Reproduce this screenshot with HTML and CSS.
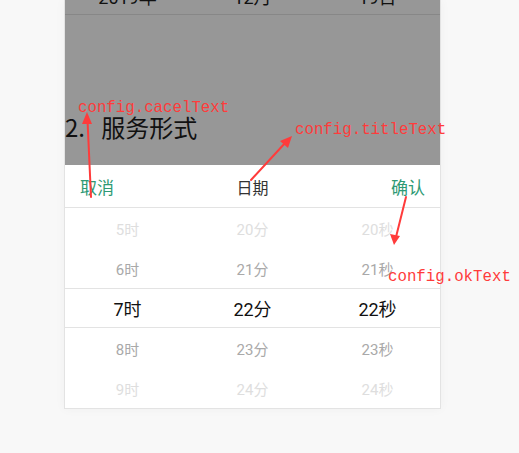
FILE: index.html
```html
<!DOCTYPE html>
<html lang="zh">
<head>
<meta charset="utf-8">
<link rel="stylesheet" href="styles.css">
</head>
<body>
<div class="stage">
  <div class="card">
    <div class="mask">
      <div class="prev-row">
        <span class="col">2019年</span>
        <span class="col">12月</span>
        <span class="col">19日</span>
      </div>
      <div class="section-title">2. 服务形式</div>
    </div>
    <div class="picker-head">
      <span class="btn">取消</span>
      <span class="title">日期</span>
      <span class="btn">确认</span>
    </div>
    <div class="picker-body">
      <div class="row far"><span class="col">5时</span><span class="col">20分</span><span class="col">20秒</span></div>
      <div class="row near"><span class="col">6时</span><span class="col">21分</span><span class="col">21秒</span></div>
      <div class="row current"><span class="col">7时</span><span class="col">22分</span><span class="col">22秒</span></div>
      <div class="row near"><span class="col">8时</span><span class="col">23分</span><span class="col">23秒</span></div>
      <div class="row far"><span class="col">9时</span><span class="col">24分</span><span class="col">24秒</span></div>
    </div>
  </div>

  <span class="note note-cancel">config.cacelText</span>
  <span class="note note-title">config.titleText</span>
  <span class="note note-ok">config.okText</span>

  <svg class="arrows" width="519" height="453" viewBox="0 0 519 453">
    <g stroke="#ff3b3b" stroke-width="2" fill="#ff3b3b" stroke-linecap="round">
      <line x1="91" y1="197" x2="87.5" y2="120"/>
      <polygon points="87,112 82,124 92,124" stroke="none"/>
      <line x1="251" y1="180" x2="286" y2="142"/>
      <polygon points="292,136 280,141 288,148" stroke="none"/>
      <line x1="406" y1="197" x2="396" y2="237"/>
      <polygon points="394,245 390,234 400,236" stroke="none"/>
    </g>
  </svg>
</div>
</body>
</html>
```

FILE: styles.css
```css
* { box-sizing: border-box; }

html, body {
  margin: 0;
  padding: 0;
  background: #f8f8f8;
}

body {
  font-family: Roboto, "Noto Sans CJK SC", sans-serif;
  width: 519px;
  height: 453px;
  overflow: hidden;
}

.stage {
  position: relative;
  width: 519px;
  height: 453px;
}

.card {
  margin-left: 64px;
  width: 377px;
  border: 1px solid #e3e3e3;
  border-top: 0;
  background: #fff;
  box-shadow: 0 0 10px rgba(0, 0, 0, 0.04);
}

.mask {
  height: 165px;
  background: #979797;
  overflow: hidden;
}

.prev-row {
  display: flex;
  height: 34px;
  margin-top: -19px;
  border-bottom: 1px solid #878787;
  color: #111;
  font-size: 18px;
}

.col {
  flex: 1;
  text-align: center;
}

.prev-row .col { line-height: 33px; }

.section-title {
  margin-top: 98px;
  font-size: 24px;
  line-height: 28px;
  word-spacing: 11px;
  color: #111;
  font-family: "Noto Sans CJK SC", sans-serif;
}

.picker-head {
  display: flex;
  justify-content: space-between;
  align-items: center;
  height: 43px;
  padding: 1px 15px 0 15px;
  border-bottom: 1px solid #e3e3e3;
  font-size: 17px;
}

.btn { color: #2e9a75; }
.title { color: #333; font-size: 16px; }

.picker-body {
  display: flex;
  flex-direction: column;
}

.row {
  display: flex;
  height: 40px;
  align-items: center;
  font-size: 15px;
}

.row.far { color: #dedede; }
.row.near { color: #a9a9a9; }
.row.current {
  color: #111;
  font-size: 18px;
  border-top: 1px solid #e3e3e3;
  border-bottom: 1px solid #e3e3e3;
}

.note {
  position: absolute;
  font-family: "Liberation Mono", monospace;
  font-size: 15.75px;
  line-height: 18px;
  color: #ff3b3b;
  white-space: nowrap;
}

.note-cancel { left: 78px; top: 99px; }
.note-title { left: 295px; top: 121px; }
.note-ok { left: 388px; top: 268px; }

.arrows {
  position: absolute;
  left: 0;
  top: 0;
  pointer-events: none;
}
```
